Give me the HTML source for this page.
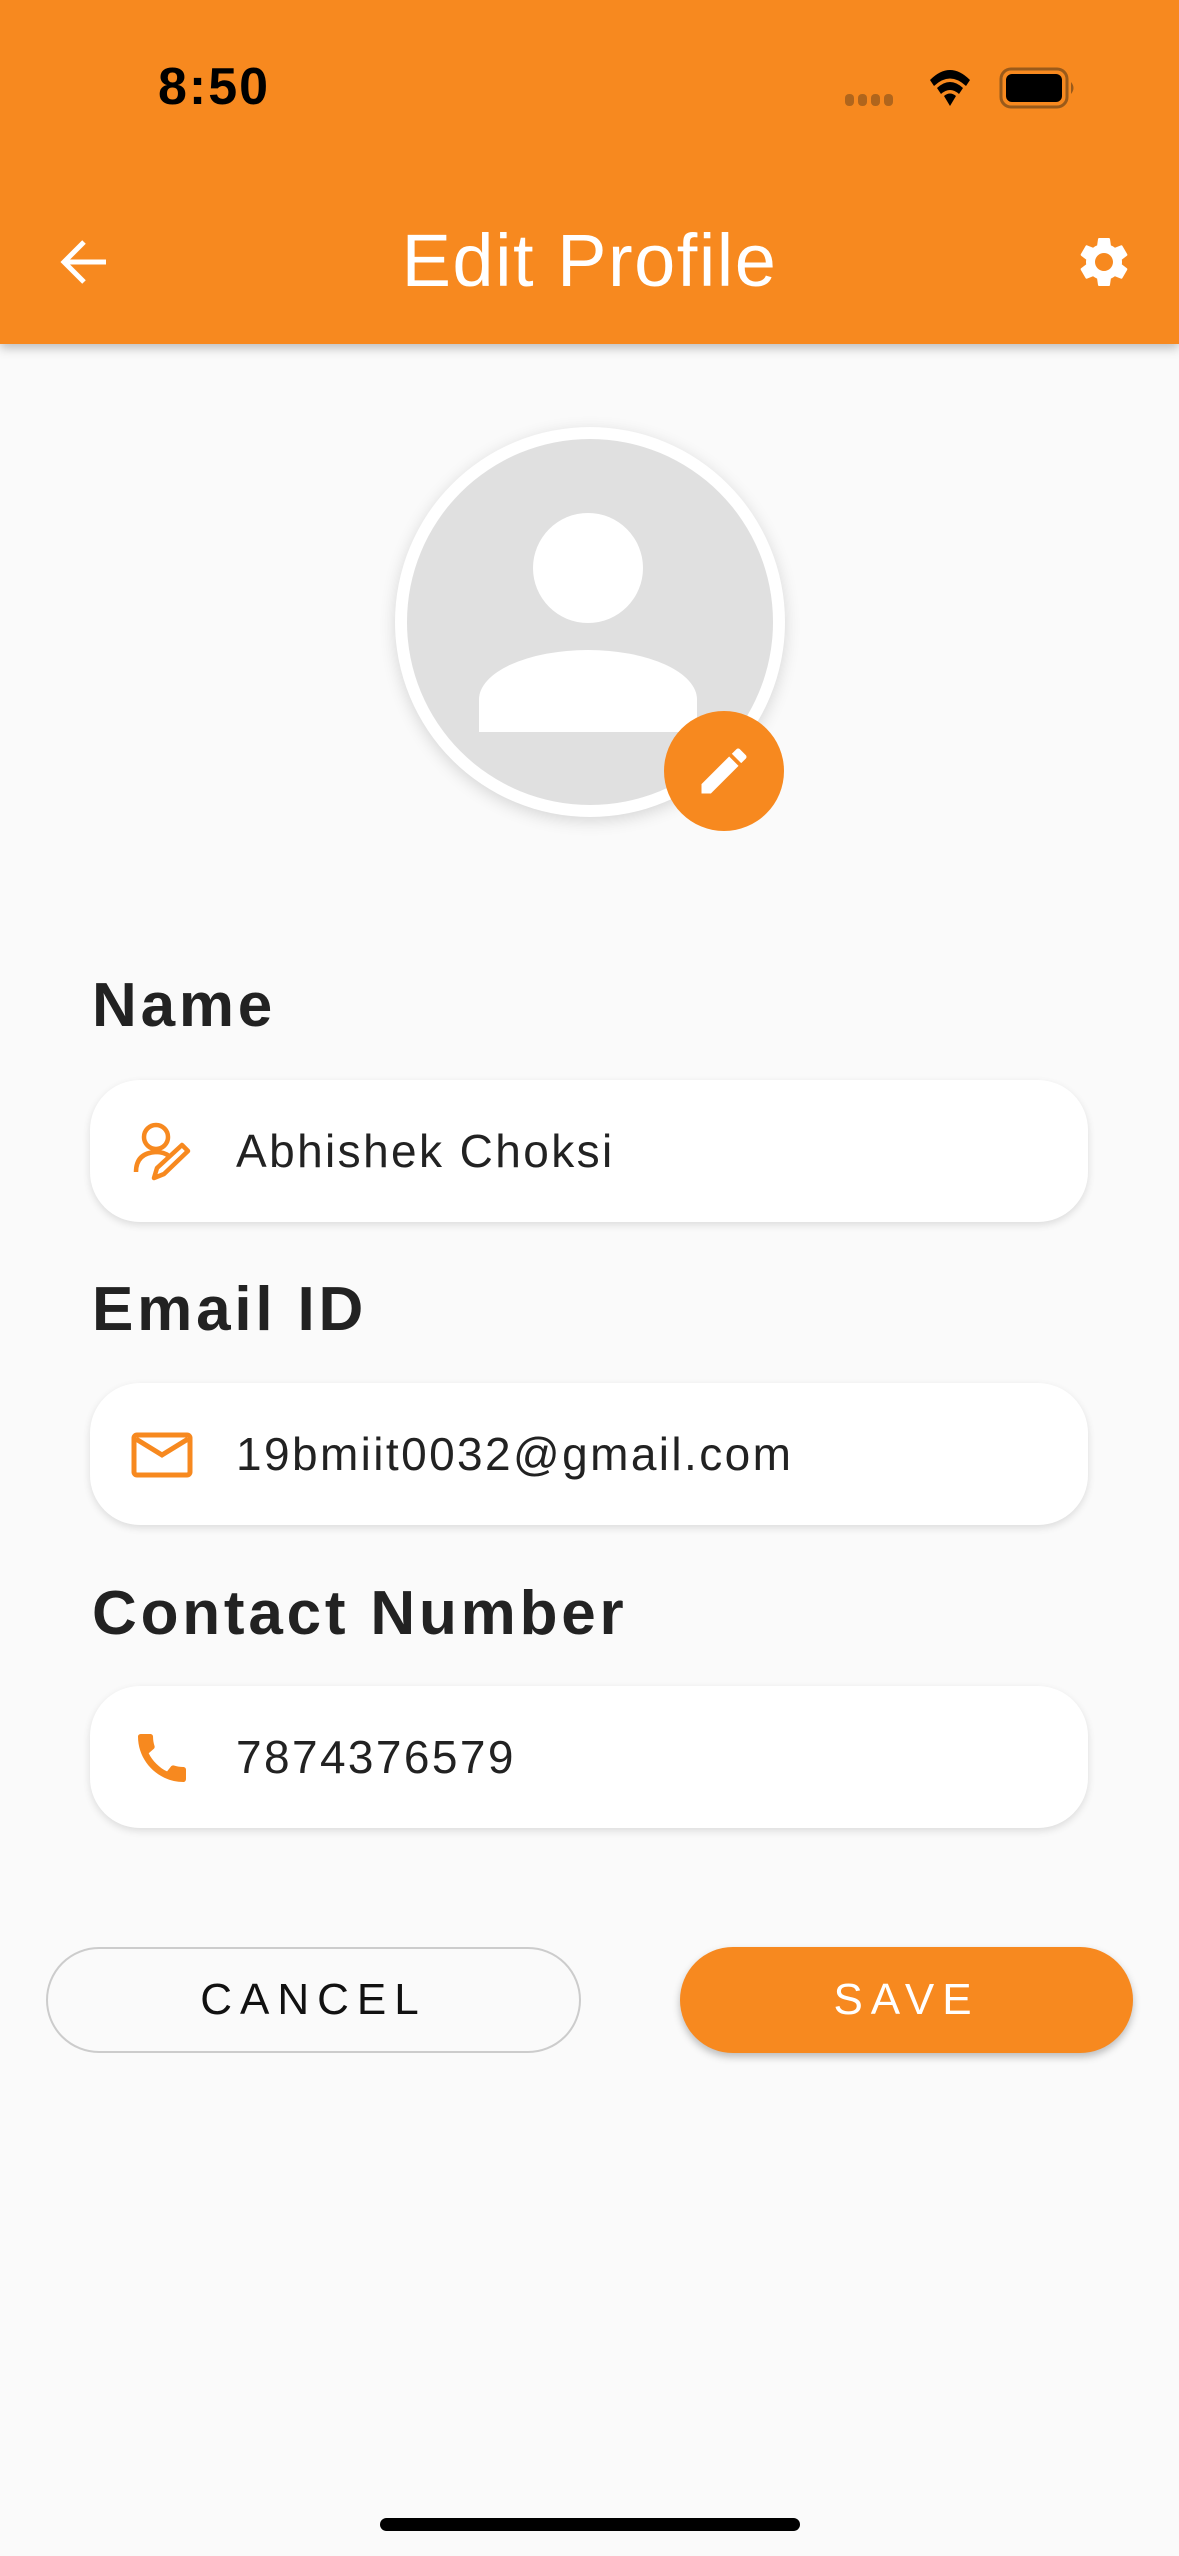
<!DOCTYPE html>
<html><head><meta charset="utf-8"><style>
*{margin:0;padding:0;box-sizing:border-box}
body{width:1179px;height:2556px;background:#fafafa;font-family:"Liberation Sans",sans-serif;position:relative;overflow:hidden}
.hdr{position:absolute;left:0;top:0;width:1179px;height:344px;background:#f7891f;box-shadow:0 4px 10px rgba(0,0,0,.25)}
.abs{position:absolute}
.lbl{position:absolute;left:92px;font-weight:bold;font-size:62px;color:#222;letter-spacing:3.8px}
.fld{position:absolute;left:90px;width:998px;height:142px;background:#fff;border-radius:50px;box-shadow:0 3px 8px rgba(0,0,0,.12)}
.fld span{position:absolute;left:146px;top:44px;font-size:46px;color:#222;letter-spacing:2.4px}
.fld svg{position:absolute;left:40px;top:40px}
</style></head><body>
<div class="hdr">
<div class="abs" style="left:158px;top:57px;font-size:52px;font-weight:bold;color:#000;letter-spacing:2px">8:50</div>
<svg class="abs" style="left:840px;top:66px" width="250" height="44" viewBox="0 0 250 44">
<g fill="#b0651c"><rect x="5" y="28" width="9" height="12" rx="4"/><rect x="18" y="28" width="9" height="12" rx="4"/><rect x="31" y="28" width="9" height="12" rx="4"/><rect x="44" y="28" width="9" height="12" rx="4"/></g>
<path d="M90 14 Q110 -6 130 14 L126 20 Q110 5 94 20Z M97 22 Q110 10 123 22 L119 28 Q110 20 101 28Z M104 30 Q110 25 116 30 L110 40Z" fill="#000"/>
<rect x="161" y="3" width="66" height="38" rx="10" fill="none" stroke="#9a5a1a" stroke-width="3"/>
<rect x="166" y="8" width="56" height="28" rx="6" fill="#000"/>
<path d="M231 16 Q236 22 231 28Z" fill="#9a5a1a"/>
</svg>
<svg class="abs" style="left:56px;top:234px" width="56" height="56" viewBox="0 0 56 56"><path d="M50 28H8M28 8L8 28l20 20" fill="none" stroke="#fff" stroke-width="5"/></svg>
<div class="abs" style="left:0;width:1179px;top:218px;text-align:center;font-size:74px;color:#fff;letter-spacing:1.5px">Edit Profile</div>
<svg class="abs" style="left:1074px;top:232px" width="60" height="60" viewBox="0 0 24 24"><path fill="#fff" d="M19.14 12.94c.04-.3.06-.61.06-.94 0-.32-.02-.64-.07-.94l2.03-1.58a.49.49 0 0 0 .12-.61l-1.920-3.32a.488.488 0 0 0-.59-.22l-2.39.96c-.5-.38-1.03-.7-1.62-.94l-.36-2.54a.484.484 0 0 0-.48-.41h-3.84c-.24 0-.43.17-.47.41l-.36 2.54c-.59.24-1.130.57-1.62.94l-2.39-.96c-.22-.08-.47 0-.59.22L2.74 8.87c-.12.21-.08.47.12.61l2.03 1.58c-.05.3-.09.63-.09.94s.02.64.07.94l-2.03 1.58a.49.49 0 0 0-.12.61l1.92 3.32c.12.22.37.29.59.22l2.39-.96c.5.38 1.03.7 1.62.94l.36 2.54c.05.24.24.41.48.41h3.84c.24 0 .44-.17.47-.41l.36-2.54c.59-.24 1.13-.56 1.62-.94l2.39.96c.22.08.47 0 .59-.22l1.92-3.32c.12-.22.07-.47-.12-.61l-2.01-1.58zM12 15.6c-1.98 0-3.6-1.62-3.6-3.6s1.62-3.6 3.6-3.6 3.6 1.62 3.6 3.6-1.62 3.6-3.6 3.6z"/></svg>
</div>
<div class="abs" style="left:395px;top:427px;width:390px;height:390px;border-radius:50%;background:#fff;box-shadow:0 4px 16px rgba(0,0,0,.15)"></div>
<div class="abs" style="left:407px;top:439px;width:366px;height:366px;border-radius:50%;background:#e0e0e0;overflow:hidden">
<div class="abs" style="left:126px;top:74px;width:110px;height:110px;border-radius:50%;background:#fff"></div>
<div class="abs" style="left:72px;top:211px;width:218px;height:82px;background:#fff;border-radius:110px 110px 0 0/50px 50px 0 0"></div>
</div>
<div class="abs" style="left:664px;top:711px;width:120px;height:120px;border-radius:50%;background:#f7891f"></div>
<svg class="abs" style="left:694px;top:741px" width="60" height="60" viewBox="0 0 24 24"><path fill="#fff" d="M3 17.25V21h3.75L17.81 9.94l-3.75-3.75L3 17.25zM20.71 7.04a1 1 0 0 0 0-1.41l-2.34-2.34a1 1 0 0 0-1.41 0l-1.83 1.830 3.75 3.75 1.83-1.83z"/></svg>

<div class="lbl" style="top:970px">Name</div>
<div class="fld" style="top:1080px">
<svg width="64" height="64" viewBox="0 0 64 64" fill="none" stroke="#f7891f" stroke-width="4.5" stroke-linejoin="round"><circle cx="26" cy="17" r="12"/><path d="M6 52 Q6 33 26 32 Q34 32 39 36"/><path d="M24 58 L27 48 L52 25 L58 31 L34 54Z"/></svg>
<span>Abhishek Choksi</span></div>
<div class="lbl" style="top:1274px">Email ID</div>
<div class="fld" style="top:1383px">
<svg width="64" height="64" viewBox="0 0 64 64" fill="none" stroke="#f7891f" stroke-width="5"><rect x="4" y="12" width="56" height="40" rx="3"/><path d="M6 16 L32 32 L58 16"/></svg>
<span>19bmiit0032@gmail.com</span></div>
<div class="lbl" style="top:1578px">Contact Number</div>
<div class="fld" style="top:1686px">
<svg width="64" height="64" viewBox="0 0 24 24"><path fill="#f7891f" d="M20.01 15.38c-1.23 0-2.42-.2-3.53-.56a.977.977 0 0 0-1.01.24l-1.57 1.97c-2.83-1.35-5.48-3.9-6.89-6.83l1.95-1.66c.27-.28.35-.67.24-1.020-.37-1.11-.56-2.3-.56-3.53 0-.54-.45-.99-.99-.99H4.19C3.65 3 3 3.24 3 3.99 3 13.28 10.73 21 20.01 21c.71 0 .99-.63.99-1.18v-3.45c0-.54-.45-.99-.99-.99z"/></svg>
<span>7874376579</span></div>

<div class="abs" style="left:46px;top:1947px;width:535px;height:106px;border:2px solid #ccc;border-radius:53px;text-align:center;line-height:102px;font-size:44px;letter-spacing:8px;color:#111">CANCEL</div>
<div class="abs" style="left:680px;top:1947px;width:453px;height:106px;background:#f7891f;border-radius:53px;text-align:center;line-height:106px;font-size:44px;letter-spacing:8px;color:#fff;box-shadow:0 4px 8px rgba(0,0,0,.25)">SAVE</div>
<div class="abs" style="left:380px;top:2518px;width:420px;height:13px;border-radius:7px;background:#000"></div>
</body></html>
